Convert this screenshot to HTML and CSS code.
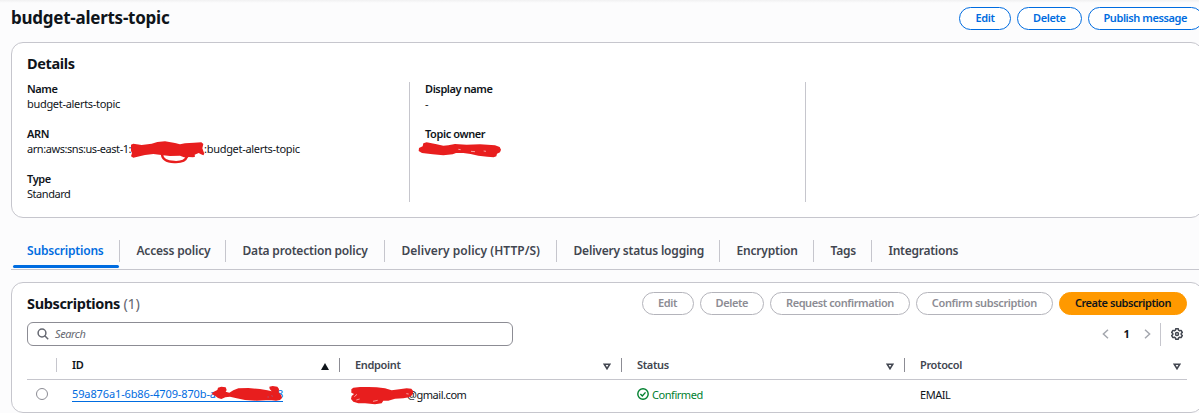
FILE: index.html
```
<!DOCTYPE html>
<html lang="en">
<head>
<meta charset="utf-8">
<title>budget-alerts-topic</title>
<link rel="stylesheet" href="styles.css">
</head>
<body>
<main class="page">
  <header class="page-header">
    <h1 class="title">budget-alerts-topic</h1>
    <div class="actions">
      <button class="btn">Edit</button>
      <button class="btn">Delete</button>
      <button class="btn">Publish message</button>
    </div>
  </header>

  <section class="card details">
    <h2 class="card-title">Details</h2>
    <div class="details-grid">
      <dl class="col">
        <div class="pair"><dt>Name</dt><dd class="topic">budget-alerts-topic</dd></div>
        <div class="pair"><dt>ARN</dt><dd class="arn"><span class="arn-head">arn:aws:sns:us-east-1:</span><span class="topic">:budget-alerts-topic</span>
          <svg class="mark mark-arn" width="100" height="35" viewBox="0 0 300 105"><path d="M33 29 40 26 65 30 95 26 112 21 135 19 165 24 180 28 195 25 222 23 244 22 250 27 247 40 253 56 250 61 243 58 236 54 224 59 225 65 219 67 206 66 200 69 190 66 180 62 150 63 130 61 100 57 75 60 62 63 40 68 33 64 36 54 33 48z"/><path class="stroke" d="M126 57c0 13 10 23 37 24 20 1 34-4 38-16"/></svg></dd></div>
        <div class="pair"><dt>Type</dt><dd>Standard</dd></div>
      </dl>
      <dl class="col">
        <div class="pair"><dt>Display name</dt><dd>-</dd></div>
        <div class="pair"><dt>Topic owner</dt><dd class="owner">
          <svg class="mark mark-owner" width="110" height="30" viewBox="0 0 330 90"><path d="M57 39 68 34 70 25 80 22 110 28 130 32 145 31 165 27 200 29 240 28 285 31 299 36 303 44 300 52 291 56 289 64 281 67 262 65 235 62 212 57 190 54 168 54 158 58 130 61 98 58 66 54 56 48z"/><path class="gap" d="m175 43 7 1m31 5 12 1m26-2 7 1"/></svg></dd></div>
      </dl>
      <div class="col"></div>
    </div>
  </section>

  <nav class="tabs">
    <a class="tab tab-1 active">Subscriptions</a>
    <a class="tab tab-2">Access policy</a>
    <a class="tab tab-3">Data protection policy</a>
    <a class="tab tab-4">Delivery policy (HTTP/S)</a>
    <a class="tab tab-5">Delivery status logging</a>
    <a class="tab tab-6">Encryption</a>
    <a class="tab tab-7">Tags</a>
    <a class="tab tab-8">Integrations</a>
  </nav>

  <section class="card subs">
    <div class="subs-header">
      <h2 class="card-title">Subscriptions <span class="count">(1)</span></h2>
      <div class="actions">
        <button class="btn disabled">Edit</button>
        <button class="btn disabled">Delete</button>
        <button class="btn disabled">Request confirmation</button>
        <button class="btn disabled confirm">Confirm subscription</button>
        <button class="btn primary">Create subscription</button>
      </div>
    </div>
    <div class="tools">
      <label class="search">
        <svg width="12" height="12" viewBox="0 0 12 12" fill="none" stroke="#656871" stroke-width="1.5"><circle cx="5" cy="5" r="3.9"/><path d="m7.8 7.8 3.4 3.4"/></svg>
        <span>Search</span>
      </label>
      <div class="pager">
        <svg width="7" height="10" viewBox="0 0 7 10" fill="none" stroke="#a4a7ae" stroke-width="1.5"><path d="M6 .8 1.4 5 6 9.2"/></svg>
        <b class="page-no">1</b>
        <svg width="7" height="10" viewBox="0 0 7 10" fill="none" stroke="#a4a7ae" stroke-width="1.5"><path d="M1 .8 5.6 5 1 9.2"/></svg>
        <span class="gear"><svg width="12" height="12" viewBox="0 0 12 12" fill="none" stroke="#424650" stroke-width="1.5" stroke-linejoin="round"><path d="M4.8.7h2.4l.4 1.5 1 .6 1.5-.4 1.2 2-1.1 1.1v1l1.1 1.1-1.2 2-1.5-.4-1 .6-.4 1.5H4.8l-.4-1.5-1-.6-1.5.4-1.2-2 1.1-1.1v-1L.7 4.4l1.2-2 1.5.4 1-.6z"/><circle cx="6" cy="6" r="1.5"/></svg></span>
      </div>
    </div>
    <div class="table">
      <div class="row head">
        <span class="cell pick"></span>
        <span class="cell sorted">ID<svg width="8" height="7" viewBox="0 0 8 7"><path d="M4 0 8 7H0z" fill="#0f141a"/></svg></span>
        <span class="cell">Endpoint<svg width="8" height="7" viewBox="0 0 8 7" fill="none" stroke="#424650" stroke-width="1.6"><path d="M1.2 1.2h5.6L4 5.7z"/></svg></span>
        <span class="cell">Status<svg width="8" height="7" viewBox="0 0 8 7" fill="none" stroke="#424650" stroke-width="1.6"><path d="M1.2 1.2h5.6L4 5.7z"/></svg></span>
        <span class="cell">Protocol<svg width="8" height="7" viewBox="0 0 8 7" fill="none" stroke="#424650" stroke-width="1.6"><path d="M1.2 1.2h5.6L4 5.7z"/></svg></span>
      </div>
      <div class="row body">
        <span class="cell pick"><i class="radio"></i></span>
        <span class="cell"><a class="link"><span>59a876a1-6b86-4709-870b-a</span><span>8</span></a>
          <svg class="mark mark-id" width="110" height="33" viewBox="0 0 330 99"><path d="M65 42 70 36 82 30 84 23 94 20 107 22 110 30 107 35 118 38 130 31 145 25 175 24 210 27 232 31 245 34 239 27 238 20 248 18 262 20 267 27 266 37 273 45 276 54 270 60 258 62 245 61 228 61 200 62 165 60 140 55 120 50 106 52 94 57 84 54 75 47z"/><path class="gap blue" d="M232 51h5m7-4 5 2"/></svg></span>
        <span class="cell"><span class="mail">@gmail.com</span>
          <svg class="mark mark-mail" width="140" height="33" viewBox="0 0 420 99"><path d="M34 28 40 23 60 21 85 21 110 22 135 25 155 31 178 28 200 25 214 26 220 34 217 45 207 52 190 55 165 56 145 62 130 62 125 70 105 73 75 70 55 70 40 65 33 57 35 48 42 42 34 38z"/><path class="gap" d="m43 50 8-7m-2 17 10-3m40 7 14-3m86-20 7 1"/></svg></span>
        <span class="cell status"><svg width="12" height="12" viewBox="0 0 12 12" fill="none" stroke="#00802f" stroke-width="1.4"><circle cx="6" cy="6" r="5.2"/><path d="m3.4 6.1 1.9 1.8 3.2-3.5"/></svg>Confirmed</span>
        <span class="cell">EMAIL</span>
      </div>
    </div>
  </section>
</main>
</body>
</html>
```
FILE: styles.css
```
* { box-sizing: border-box; }

body {
  margin: 0;
  overflow: hidden;
  background: #fcfcfd;
  color: #0f141a;
  font: 11px/15px "Noto Sans", "Open Sans", sans-serif;
  letter-spacing: -0.45px;
}

h1, h2, dl, dd { margin: 0; }

.page {
  width: 1203px;
  height: 413px;
  padding-left: 11px;
  background: linear-gradient(#f1f1f2, #fcfcfd 3px);
}

.page-header {
  display: flex;
  justify-content: space-between;
  height: 42px;
  padding-top: 7px;
}

.title { font-size: 17px; line-height: 22px; letter-spacing: -0.25px; }

.actions { display: flex; gap: 6px; }

.btn {
  height: 23px;
  min-width: 52px;
  padding: 0 15px 2px;
  border: 1px solid #006ce0;
  border-radius: 12px;
  background: #fff;
  color: #006ce0;
  font: 600 11px/19px "Noto Sans", "Open Sans", sans-serif;
  letter-spacing: -0.42px;
  white-space: nowrap;
}

.btn.disabled { border-color: #b4b4bb; color: #8c8c94; }
.btn.confirm { letter-spacing: -0.38px; }
.btn.primary { border-color: #ff9900; background: #ff9900; color: #0f141a; letter-spacing: -0.45px; }

.card {
  border: 1px solid #c6c6cd;
  border-radius: 12px;
  background: #fff;
  padding: 0 15px;
}

.card-title { font-size: 14.5px; line-height: 20px; letter-spacing: -0.36px; }

.details { height: 176px; padding-top: 10px; }

.details-grid {
  display: grid;
  grid-template-columns: 382px 396px 1fr;
  grid-template-rows: 120px;
  height: 120px;
  margin-top: 9px;
}

.col + .col { border-left: 1px solid #c6c6cd; padding-left: 15px; }
.pair { height: 45px; }
.pair:first-child { margin-top: -1px; }
dt { font-weight: 600; letter-spacing: -0.4px; }
.topic { letter-spacing: -0.31px; }

.arn, .owner { position: relative; }
.arn { display: flex; gap: 73px; }
.arn-head { letter-spacing: -0.44px; }

/* Redaction strokes drawn over private values */
.mark { position: absolute; fill: #e81e1e; }
.mark .stroke { fill: none; stroke: #e81e1e; stroke-width: 7; stroke-linecap: round; }
.mark .gap { fill: none; stroke: #fff; stroke-width: 2.5; opacity: 0.7; }
.mark .blue { stroke: #8a6ea8; }
.mark-arn { left: 93px; top: -6px; }
.mark-owner { left: -25px; top: -6px; }
.mark-id { left: 133px; top: 0; }
.mark-mail { left: 0; top: 0; }

.tabs {
  display: flex;
  height: 52px;
  padding-top: 22px;
  border-bottom: 1px solid #c6c6cd;
}

.tab {
  position: relative;
  height: 22px;
  padding-left: 16.5px;
  border-right: 1px solid #c6c6cd;
  color: #424650;
  font-size: 12px;
  font-weight: 600;
  line-height: 22px;
  letter-spacing: -0.19px;
  white-space: nowrap;
}

.tab-1 { width: 109px; padding-left: 16px; }
.tab-2 { width: 106px; }
.tab-3 { width: 159px; }
.tab-4 { width: 172px; letter-spacing: 0.02px; }
.tab-5 { width: 163px; }
.tab-6 { width: 94px; }
.tab-7 { width: 58px; }
.tab-8 { width: 100px; border-right: 0; letter-spacing: -0.25px; }

.tab.active { color: #006ce0; }
.tab.active::after {
  content: "";
  position: absolute;
  left: 2px;
  right: 0;
  top: 25px;
  height: 3px;
  border-radius: 2px;
  background: #006ce0;
}

.subs { height: 131px; margin-top: 12px; }

.subs-header { display: flex; justify-content: space-between; padding-top: 9px; height: 39px; }
.subs-header .card-title { padding-top: 1px; }
.count { color: #656871; font-weight: 400; }

.tools { display: flex; justify-content: space-between; height: 24px; }

.search {
  display: flex;
  align-items: center;
  gap: 6px;
  width: 486px;
  height: 24px;
  padding: 0 0 1px 9px;
  border: 1px solid #8c8c94;
  border-radius: 6px;
  color: #656871;
  font-style: italic;
}
.search svg { margin-top: 1px; }
.search span { margin-top: -1px; letter-spacing: -0.4px; }

.pager { display: flex; align-items: center; }
.page-no { width: 35px; padding-bottom: 1px; text-align: center; }
.gear {
  display: flex;
  align-items: center;
  height: 23px;
  margin-left: 9px;
  padding: 0 4px 0 10px;
  border-left: 1px solid #c6c6cd;
}

.row { display: grid; grid-template-columns: 30px 283px 282px 283px 1fr; }
.cell { position: relative; display: flex; align-items: center; padding-left: 15px; white-space: nowrap; }
.head {
  height: 34px;
  padding-top: 12px;
  align-items: start;
  border-bottom: 1px solid #c6c6cd;
  color: #424650;
  font-weight: 600;
  letter-spacing: -0.35px;
  line-height: 13px;
}
.head .cell { justify-content: space-between; height: 14px; padding-right: 10px; padding-bottom: 1px; border-right: 1px solid #8c8c94; }
.head .cell svg { margin-top: 3px; }
.head .pick { border-color: #c6c6cd; }
.head .cell:last-child { border: 0; padding-right: 6px; }
.head .sorted { color: #0f141a; }
.body .cell { height: 28px; }
.body .pick { padding-left: 9px; }

.radio { display: block; width: 12px; height: 12px; border: 1px solid #8c8c94; border-radius: 50%; }

.link {
  display: flex;
  gap: 61px;
  height: 16px;
  border-bottom: 1px solid #006ce0;
  color: #006ce0;
  letter-spacing: -0.12px;
}

.mail { padding-left: 52px; }
.body .status { gap: 3px; color: #00802f; }
```
